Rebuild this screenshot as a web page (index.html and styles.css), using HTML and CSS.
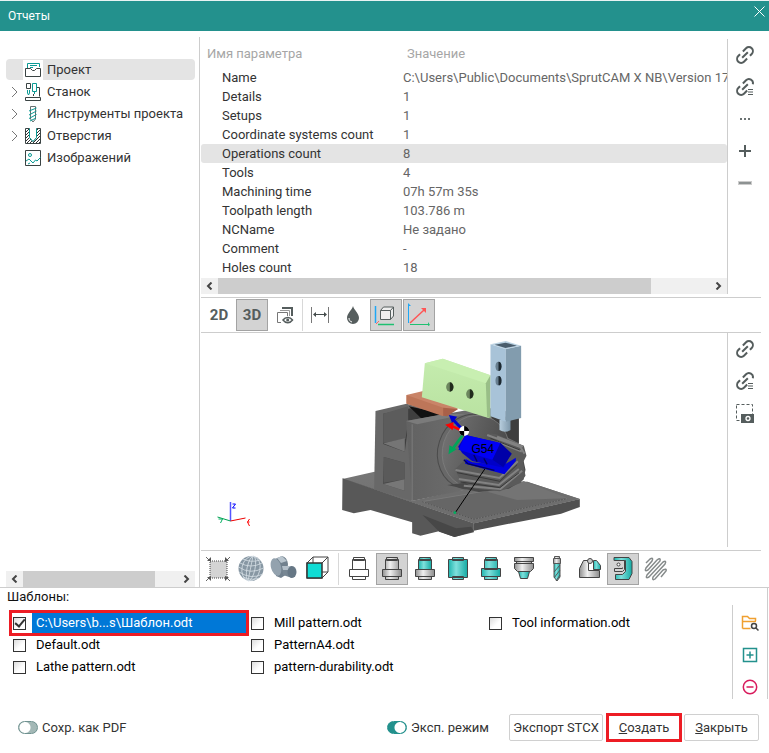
FILE: index.html
```html
<!DOCTYPE html>
<html lang="ru">
<head>
    <meta charset="UTF-8">
    <meta name="viewport" content="width=device-width, initial-scale=1.0">
    <title>Отчеты</title>
    <link rel="stylesheet" href="styles.css">
</head>
<body>

<!-- Shared icons and gradients -->
<svg class="defs" width="0" height="0" aria-hidden="true">
    <defs>
        <linearGradient id="steel"><stop offset="0" stop-color="#8f8f8f"/><stop offset=".4" stop-color="#f0f0f0"/><stop offset="1" stop-color="#8c8c8c"/></linearGradient>
        <linearGradient id="teal"><stop offset="0" stop-color="#1fb5ae"/><stop offset=".4" stop-color="#7fe0dc"/><stop offset="1" stop-color="#14aaa3"/></linearGradient>
        <pattern id="hatch" width="3" height="3" patternUnits="userSpaceOnUse"><path d="M0 3L3 0" stroke="#333" stroke-width="1"/></pattern>
    </defs>
    <symbol id="link" viewBox="0 0 20 20">
        <g fill="none" stroke="#555d5d" stroke-width="2" transform="translate(10 10) rotate(-45)">
            <path d="M1 -4H5.500a4 4 0 0 1 0 8H3M-1 4H-5.500a4 4 0 0 1 0-8H-3M-4 0H4"/>
        </g>
    </symbol>
    <symbol id="link-list" viewBox="0 0 20 20">
        <g fill="none" stroke="#555d5d" stroke-width="2" transform="translate(10 10) rotate(-45)">
            <path d="M1 -4H5.500a4 4 0 0 1 2 7.500M-1 4H-5.500a4 4 0 0 1 0-8H-3M-4 0H4"/>
        </g>
        <path d="M13 12.500h5M13 15h5M13 17.500h5" stroke="#555d5d"/>
    </symbol>
</svg>

<header class="titlebar">
    <h1>Отчеты</h1>
    <button class="close" aria-label="Закрыть окно">
        <svg width="11" height="11" viewBox="0 0 11 11"><path d="M.5 .5l10 10M10.500 .5l-10 10" stroke="#fff" fill="none"/></svg>
    </button>
</header>

<main class="workspace">
    <!-- Report sections tree -->
    <nav class="sidebar">
        <ul class="tree">
            <li class="selected">
                <span class="arrow"></span>
                <svg class="tree-icon" width="20" height="20" viewBox="0 0 20 20" fill="none">
                    <path d="M4.500 8V3.500h12V7M7 5.500h7M7 7.500h3" stroke="#0a9a94"/>
                    <path d="M2.500 16.500v-8h5l2 2h2l2-2h4v8z" stroke="#3a4343"/>
                </svg>
                <span>Проект</span>
            </li>
            <li>
                <span class="arrow"><svg width="7" height="12" viewBox="0 0 7 12"><path d="M1 1l5 5-5 5" fill="none" stroke="#777"/></svg></span>
                <svg class="tree-icon" width="20" height="20" viewBox="0 0 20 20" fill="none">
                    <path d="M3.500 1.500h4v5h-4zM2.500 15.500h15v3h-15zM14 5.500h2.500v9M10.500 12v2" stroke="#3a4343"/>
                    <path d="M9.500 1.500h4v8h-4zM4.500 8v3l1 2 1-2v-3M11.500 10v2" stroke="#0a9a94"/>
                </svg>
                <span>Станок</span>
            </li>
            <li>
                <span class="arrow"><svg width="7" height="12" viewBox="0 0 7 12"><path d="M1 1l5 5-5 5" fill="none" stroke="#777"/></svg></span>
                <svg class="tree-icon" width="20" height="20" viewBox="0 0 20 20" fill="none">
                    <path d="M7.500 5V2.500h5V6M7.500 5v10l2.500 3 2.500-3V6" stroke="#667070"/>
                    <path d="M6 7l7.500-3M6 11l7.500-4M6 14.500l7.500-4M7 17l6-3" stroke="#0a9a94"/>
                </svg>
                <span>Инструменты проекта</span>
            </li>
            <li>
                <span class="arrow"><svg width="7" height="12" viewBox="0 0 7 12"><path d="M1 1l5 5-5 5" fill="none" stroke="#777"/></svg></span>
                <svg class="tree-icon" width="20" height="20" viewBox="0 0 20 20">
                    <path d="M2.500 2.500h4v9l3.500 4 3.500-4v-9h4v15h-15z" fill="url(#hatch)" stroke="#3a4343"/>
                    <path d="M6.500 2.500v9l3.500 4 3.500-4v-9" fill="#fff" stroke="#0a9a94"/>
                </svg>
                <span>Отверстия</span>
            </li>
            <li>
                <span class="arrow"></span>
                <svg class="tree-icon" width="20" height="20" viewBox="0 0 20 20" fill="none">
                    <path d="M2.500 2.500h15v15h-15z" stroke="#3a4343"/>
                    <path d="M3 13l3-2 4 4 2.500-3 1.500 1 3.500-3.500M5 16l2-1" stroke="#0a9a94"/>
                    <circle cx="7" cy="7" r="1.500" stroke="#0a9a94"/>
                </svg>
                <span>Изображений</span>
            </li>
        </ul>
        <div class="scrollbar">
            <button class="scroll-arrow" aria-label="Влево"><svg width="7" height="8" viewBox="0 0 7 8"><path d="M5.500 .5L2 4l3.500 3.500" fill="none" stroke="#444" stroke-width="2"/></svg></button>
            <div class="scroll-track"><div class="scroll-thumb" style="width: 85%"></div></div>
            <button class="scroll-arrow" aria-label="Вправо"><svg width="7" height="8" viewBox="0 0 7 8"><path d="M1.500 .5L5 4 1.500 7.500" fill="none" stroke="#444" stroke-width="2"/></svg></button>
        </div>
    </nav>

    <div class="content">
        <!-- Project parameters -->
        <section class="pane">
            <div class="params">
                <table>
                    <thead>
                        <tr><th>Имя параметра</th><th>Значение</th></tr>
                    </thead>
                    <tbody>
                        <tr><td>Name</td><td>C:\Users\Public\Documents\SprutCAM X NB\Version 17\</td></tr>
                        <tr><td>Details</td><td>1</td></tr>
                        <tr><td>Setups</td><td>1</td></tr>
                        <tr><td>Coordinate systems count</td><td>1</td></tr>
                        <tr class="selected"><td>Operations count</td><td>8</td></tr>
                        <tr><td>Tools</td><td>4</td></tr>
                        <tr><td>Machining time</td><td>07h 57m 35s</td></tr>
                        <tr><td>Toolpath length</td><td>103.786 m</td></tr>
                        <tr><td>NCName</td><td>Не задано</td></tr>
                        <tr><td>Comment</td><td>-</td></tr>
                        <tr><td>Holes count</td><td>18</td></tr>
                    </tbody>
                </table>
                <div class="scrollbar">
                    <button class="scroll-arrow" aria-label="Влево"><svg width="7" height="8" viewBox="0 0 7 8"><path d="M5.500 .5L2 4l3.500 3.500" fill="none" stroke="#444" stroke-width="2"/></svg></button>
                    <div class="scroll-track"><div class="scroll-thumb" style="width: 88%"></div></div>
                    <button class="scroll-arrow" aria-label="Вправо"><svg width="7" height="8" viewBox="0 0 7 8"><path d="M1.500 .5L5 4 1.500 7.500" fill="none" stroke="#444" stroke-width="2"/></svg></button>
                </div>
            </div>
            <div class="rail">
                <button aria-label="Ссылка"><svg width="20" height="20"><use href="#link"/></svg></button>
                <button aria-label="Ссылка списком"><svg width="20" height="20"><use href="#link-list"/></svg></button>
                <button aria-label="Ещё"><svg width="20" height="20" viewBox="0 0 20 20"><path d="M5 9h2v2H5zM9 9h2v2H9zM13 9h2v2h-2z" fill="#6b7272"/></svg></button>
                <button aria-label="Добавить"><svg width="20" height="20" viewBox="0 0 20 20"><path d="M10 4v12M4 10h12" stroke="#555d5d" stroke-width="2"/></svg></button>
                <button aria-label="Убрать"><svg width="20" height="20" viewBox="0 0 20 20"><path d="M3 8h14v4H3z" fill="#ccc"/><path d="M4 9h12v2H4z" fill="#8d9292"/></svg></button>
            </div>
        </section>

        <!-- View toolbar -->
        <div class="toolbar">
            <button class="mode">2D</button>
            <button class="mode active">3D</button>
            <button aria-label="Видимость"><svg width="20" height="20" viewBox="0 0 20 20" fill="none">
                <path d="M7 3h10v8" stroke="#555d5d" stroke-width="2"/><path d="M5 5.500h9.500V11" stroke="#999"/><path d="M6 17.500H2.500v-10h10V11" stroke="#777"/>
                <path d="M8 15c2.500-3.500 7-3.500 9.500 0-2.500 3.500-7 3.500-9.500 0z" fill="#fff" stroke="#555d5d" stroke-width="1.500"/><circle cx="12.700" cy="15" r="1.500" fill="#555d5d"/>
            </svg></button>
            <span class="separator"></span>
            <button aria-label="Размер"><svg width="20" height="20" viewBox="0 0 20 20">
                <path d="M1.500 2v16M18.500 2v16" stroke="#777"/><path d="M4 9.500h12" stroke="#444b4b"/><path d="M3 9.500l3-2.500v5zM17 9.500l-3-2.500v5z" fill="#444b4b"/>
            </svg></button>
            <button aria-label="Жидкость"><svg width="20" height="20" viewBox="0 0 20 20">
                <path d="M10 1c1 4 6 7.500 6 12a6 6 0 0 1-12 0c0-4.500 5-8 6-12z" fill="#555d5d"/><path d="M6 13c0 2 1 3.500 3 4" stroke="#fff" fill="none"/>
            </svg></button>
            <button class="active" aria-label="Габарит"><svg width="24" height="24" viewBox="0 0 24 24" fill="none">
                <path d="M1.500 3v17" stroke="#1ea7f5" stroke-width="1.500"/><path d="M4 21.500h16" stroke="#1fc071" stroke-width="1.500"/><path d="M2 21l3-3" stroke="#f66"/>
                <path d="M6.500 7.500l3-3.500h10v9l-3 3.500h-10zM6.500 7.500h10v9M16.500 7.500l3-3.500" stroke="#555d5d" fill="#eee"/>
            </svg></button>
            <button class="active" aria-label="Оси"><svg width="24" height="24" viewBox="0 0 24 24" fill="none">
                <path d="M1.500 2v18" stroke="#1ea7f5"/><path d="M1 0v3h3z" fill="#1ea7f5"/><path d="M3 21.500h18" stroke="#1fc071"/><path d="M21 19v4l2-1z" fill="#1fc071"/>
                <path d="M3 20L17 7" stroke="#f55" stroke-width="1.500"/><path d="M14 5h5v5z" fill="#f55"/>
            </svg></button>
        </div>

        <!-- Machine view -->
        <section class="pane">
            <svg class="scene" height="217" viewBox="0 0 525 217" preserveAspectRatio="xMidYMid meet">
                <defs>
                    <linearGradient id="wall"><stop offset="0" stop-color="#626262"/><stop offset="1" stop-color="#767676"/></linearGradient>
                    <linearGradient id="tray" x1="0" y1="0" x2="1" y2="1"><stop offset="0" stop-color="#777"/><stop offset="1" stop-color="#686868"/></linearGradient>
                    <linearGradient id="disk"><stop offset="0" stop-color="#707070"/><stop offset="1" stop-color="#474747"/></linearGradient>
                    <linearGradient id="green" x1="0" y1="0" x2="0" y2="1"><stop offset="0" stop-color="#c5ecae"/><stop offset="1" stop-color="#b9e2a1"/></linearGradient>
                    <linearGradient id="nozzle"><stop offset="0" stop-color="#b8cede"/><stop offset="1" stop-color="#7e98ab"/></linearGradient>
                </defs>
                <g transform="translate(129 2) scale(.3333)">
                    <!-- Bed -->
                    <path d="M36 432l96-22 113 88 345-58 158 52-318 73z" fill="url(#tray)"/>
                    <path d="M36 430l394 135v27l-58 14-47-17-55 13-25-7v-33L120 525l-50 10-35-10z" fill="#585858"/>
                    <path d="M276 540l50 50 46 16 58-17-8-14-45 5z" fill="#474747"/>
                    <path d="M430 565l318-73v24l-56 20-262 51z" fill="#505050"/>
                    <path d="M245 498l130-30 215-28 158 52-318 73z" fill="#6e6e6e"/>
                    <path d="M275 500l310-52 125 43-280 62z" fill="#666" stroke="#808080" stroke-width="2"/>
                    <path d="M470 470l110-32 130 52-150 5z" fill="#747474"/>
                    <path d="M275 500l155 53 280-62" fill="none" stroke="#444" stroke-width="2" stroke-dasharray="5 4"/>
                    <!-- Housing -->
                    <path d="M135 228l93-22 122 30-105 262-114-35z" fill="#686868"/>
                    <path d="M158 236l90-18 97 22-110 18-12 92-65-23z" fill="#3f3f3f"/>
                    <path d="M158 236l75-22v50l-8 48-67 12z" fill="#5c5c5c"/>
                    <path d="M158 325l65-15v40z" fill="#757575"/>
                    <path d="M160 366l62 17v84l-64-20z" fill="#484848"/>
                    <path d="M160 366l62 17v50l-62 10z" fill="#5a5a5a"/>
                    <path d="M158 447l64-14v34z" fill="#777"/>
                    <path d="M235 214l110 24-70 15z" fill="#111"/>
                    <path d="M227 258l123-22 110-20 105 20v205l-165 25-155 32z" fill="url(#wall)"/>
                    <path d="M227 258l118-22 60 2-145 30z" fill="#7b7b7b"/>
                    <path d="M245 268v230" stroke="#7c7c7c" stroke-width="3"/>
                    <path d="M480 240l85 10v75l-60-30z" fill="#3e3e3e"/>
                    <!-- Spindle disk -->
                    <ellipse cx="422" cy="350" rx="100" ry="113" transform="rotate(18 422 350)" fill="#686868" stroke="#4b4b4b" stroke-width="3"/>
                    <ellipse cx="436" cy="350" rx="100" ry="110" transform="rotate(18 436 350)" fill="url(#disk)" stroke="#808080" stroke-width="2"/>
                    <path d="M350 450l130-16 90-100 15 70-6 30-44 27-90 10z" fill="#484848"/>
                    <!-- Chuck -->
                    <path d="M470 295l25 2 85 35 8 30-10 20 7 40-15 22-62 25-75-8-45-28-15-30 30-28 110-20z" fill="#5a5a5a"/>
                    <g stroke="#828282" stroke-width="6" fill="none">
                        <path d="M470 300l100 36 12 20M375 405l132 24 55-50M385 432l120 18 60-48M400 452l110 10 65-55M500 305l78 30M500 320l74 30"/>
                    </g>
                    <g stroke="#393939" stroke-width="3" fill="none">
                        <path d="M480 310l88 35M380 413l128 26 52-50M390 441l118 17 58-45"/>
                    </g>
                    <!-- Part -->
                    <path d="M405 372l20 10 95 8 36-22v10l-34 40-118-32z" fill="#0000e0"/>
                    <path d="M383 335l22-35 105 24 30 32-20 42-95-20-30-24z" fill="#0000c8"/>
                    <path d="M405 300l105 24-24 50-102-30z" fill="#0000f5"/>
                    <path d="M510 324l34 32-26 40-32-22z" fill="#0000a8"/>
                    <path d="M400 374l12 12 80 20M430 360l10 20M460 370l10 18" stroke="#000060" fill="none" stroke-width="4"/>
                    <!-- Orange slide -->
                    <path d="M228 180l50-12 105 52-40 22-115-37z" fill="#c98468"/>
                    <path d="M228 180l110 38v26l-110-38z" fill="#bd7659"/>
                    <path d="M338 218l45 4-33 22-12-2z" fill="#a96048"/>
                    <!-- Green block -->
                    <path d="M283 85l54-14 143 50-4 129-202-63z" fill="url(#green)"/>
                    <path d="M283 85l54-14 143 50-14 24z" fill="#c8efb1"/>
                    <path d="M466 145l14-24v128l-10-2z" fill="#99be87"/>
                    <ellipse cx="358" cy="156" rx="11" ry="14" fill="#6d865f"/><path d="M358 142a11 14 0 0 1 0 28z" fill="#202b1c"/>
                    <ellipse cx="418" cy="177" rx="11" ry="14" fill="#6d865f"/><path d="M418 163a11 14 0 0 1 0 28z" fill="#202b1c"/>
                    <!-- Blue tool holder -->
                    <path d="M507 255h33v30q-16 11-33 0z" fill="url(#nozzle)"/>
                    <path d="M480 28l46 14v218l-46-16z" fill="#a8c3d8"/>
                    <path d="M526 42l46-10v217l-46 11z" fill="#829cae"/>
                    <path d="M480 28l46-10 46 14-46 11z" fill="#bbd2e2"/>
                    <path d="M493 29l32-6 34 9-34 7z" fill="#4b5e6d"/>
                    <ellipse cx="504" cy="94" rx="9" ry="14" fill="#687f90"/><path d="M504 80a9 14 0 0 1 0 28z" fill="#1c2830"/>
                    <ellipse cx="504" cy="137" rx="9" ry="14" fill="#687f90"/><path d="M504 123a9 14 0 0 1 0 28z" fill="#1c2830"/>
                    <!-- Origin -->
                    <path d="M400 288l-32-34" stroke="#0000d0" stroke-width="9"/><path d="M355 240l25 5-15 19z" fill="#0000d0"/>
                    <path d="M400 290l-38-18" stroke="#f00" stroke-width="8"/><path d="M344 269l25-7-2 24z" fill="#f00"/>
                    <path d="M397 300l-28 38" stroke="#00a55a" stroke-width="8"/><path d="M354 358l3-27 22 12z" fill="#00a55a"/>
                    <circle cx="401" cy="288" r="15" fill="#fff"/><path d="M401 288v-15a15 15 0 0 1 15 15zM401 288v15a15 15 0 0 1-15-15z" fill="#000"/>
                    <path d="M463 402l-88 130" stroke="#000" stroke-width="3"/><circle cx="373" cy="533" r="4" fill="#00b060"/>
                </g>
                <text class="zero-label" x="270" y="120">G54</text>
                <!-- Axes -->
                <path d="M29 188v-19" stroke="#55f" stroke-width="1.500"/><path d="M29 188l15-3" stroke="#e00"/><path d="M29 188l-13-4" stroke="#00a050"/>
                <path d="M31 171h3l-3 4h3" stroke="#00f" fill="none"/><path d="M48 186l-2 3 2 4M46 189h2" stroke="#f00" fill="none"/><path d="M17 186h4l-2 4" stroke="#00b060" fill="none"/>
            </svg>
            <div class="rail">
                <button aria-label="Ссылка"><svg width="20" height="20"><use href="#link"/></svg></button>
                <button aria-label="Ссылка списком"><svg width="20" height="20"><use href="#link-list"/></svg></button>
                <button aria-label="Снимок"><svg width="20" height="20" viewBox="0 0 20 20">
                    <path d="M1.500 1.500h16v16h-16z" fill="none" stroke="#555d5d" stroke-dasharray="3 2"/>
                    <path d="M6 11h13v9H6z" fill="#555d5d"/><circle cx="13" cy="15.500" r="2" fill="none" stroke="#fff" stroke-width="1.300"/>
                </svg></button>
            </div>
        </section>

        <!-- Display toolbar -->
        <div class="toolbar display-toolbar">
            <button aria-label="Показать всё"><svg width="28" height="28" viewBox="0 0 28 28">
                <path d="M6 6h17v17H6z" fill="#d4d4d4" stroke="#444" stroke-dasharray="1 1"/>
                <path d="M2 2l5 5M26 2l-5 5M2 26l5-5M26 26l-5-5" stroke="#666"/><path d="M3 6h4V2zM25 6h-4V2zM3 22h4v4zM25 22h-4v4z" fill="#555"/>
            </svg></button>
            <button aria-label="Сфера"><svg width="28" height="28" viewBox="0 0 28 28" fill="none">
                <circle cx="14" cy="13.500" r="12.500" fill="#8797a3"/>
                <g stroke="#d5dee5" stroke-width=".8"><ellipse cx="14" cy="13.500" rx="4" ry="12.500" transform="rotate(12 14 13.500)"/><ellipse cx="14" cy="13.500" rx="9" ry="12.500" transform="rotate(12 14 13.500)"/><path d="M3 8q11 6 22 0M1.500 12q12 8 25 1M2 17q12 8 24 2M6 22q9 4 16 1M6 4q8 4 17 1M16 1l-5 25"/></g>
            </svg></button>
            <button aria-label="Тело"><svg width="28" height="28" viewBox="0 0 28 28">
                <path d="M5 4l7-3q5 1 6 8l-1 10-6 4-5-2z" fill="#71818e"/><path d="M7 3l5-2 5 5-6 2z" fill="#b9c5ce"/>
                <ellipse cx="6" cy="12" rx="5" ry="9" transform="rotate(-15 6 12)" fill="#93a2ae"/>
                <path d="M12 11l10 0v12l-9-3z" fill="#778793"/><path d="M12 11h9l2 4-10 0z" fill="#b4c0ca"/><ellipse cx="22" cy="17" rx="4.500" ry="6" fill="#667785"/>
            </svg></button>
            <button aria-label="Куб"><svg width="28" height="28" viewBox="0 0 28 28">
                <path d="M4 8l6-6h15v15l-6 6H4zM10 2v15h15M4 23l6-6M19 8l6-6" fill="#fff" stroke="#444"/><path d="M4 8h15v15H4z" fill="#10dcd5" stroke="#333" stroke-width="1.500"/>
            </svg></button>
            <span class="separator"></span>
            <button aria-label="Каркас"><svg width="28" height="28" viewBox="0 0 28 28" fill="#fff" stroke="#444">
                <path d="M8.500 2.500h11v3h-11zM7.500 4.500h13v10h-13zM7.500 21.500h13v3h-13zM4.500 14.500h19v7h-19z"/>
            </svg></button>
            <button class="active" aria-label="Станок"><svg width="28" height="28" viewBox="0 0 28 28" fill="url(#steel)" stroke="#444">
                <path d="M8.500 2.500h11v3h-11zM7.500 4.500h13v10h-13zM7.500 21.500h13v3h-13zM4.500 14.500h19v7h-19z"/>
            </svg></button>
            <button aria-label="Деталь"><svg width="28" height="28" viewBox="0 0 28 28" fill="url(#steel)" stroke="#444">
                <path d="M8.500 2.500h11v3h-11zM7.500 4.500h13v10h-13z" fill="url(#teal)"/><path d="M7.500 21.500h13v3h-13zM4.500 14.500h19v7h-19z"/>
            </svg></button>
            <button aria-label="Заготовка"><svg width="28" height="28" viewBox="0 0 28 28" fill="url(#teal)" stroke="#444">
                <path d="M8.500 2.500h11v3h-11zM8.500 21.500h11v3h-11zM4.500 4.500h19v18h-19z"/>
            </svg></button>
            <button aria-label="Остаток"><svg width="28" height="28" viewBox="0 0 28 28" fill="url(#teal)" stroke="#444">
                <path d="M8.500 2.500h11v3h-11zM7.500 4.500h13v10h-13zM7.500 21.500h13v3h-13zM4.500 13.500h19v8h-19z"/>
            </svg></button>
            <button aria-label="Патрон"><svg width="28" height="28" viewBox="0 0 28 28" fill="url(#steel)" stroke="#444">
                <path d="M8.500 16.500h11l-2 7h-7z" fill="url(#teal)"/><path d="M4.500 2.500h19v4h-19zM6.500 6.500h15v2h-15zM4.500 8.500h19v5l-3 3h-13l-3-3z"/>
            </svg></button>
            <button aria-label="Инструмент"><svg width="28" height="28" viewBox="0 0 28 28" stroke="#555">
                <path d="M11 8h6v14l-3 4-3-4z" fill="url(#teal)"/><path d="M11.500 1.500h5v2h-5zM10.500 3.500h7v5h-7z" fill="url(#steel)"/><path d="M11 17l6-7M11 23l6-8M13 26l4-6" fill="none"/>
            </svg></button>
            <button aria-label="Оснастка"><svg width="28" height="28" viewBox="0 0 28 28" stroke="#444">
                <path d="M3.500 22.500v-9l4-8h5v10h11v7z" fill="url(#steel)"/><path d="M17.500 14.500v-9h3l4 5v4z" fill="url(#teal)"/><circle cx="14" cy="6" r="2.500" fill="#ccc"/>
            </svg></button>
            <button class="active" aria-label="Узлы станка"><svg width="28" height="28" viewBox="0 0 28 28" fill="url(#teal)" stroke="#444">
                <path d="M5 2.500h15l3 4v12l-3 6H6.500v-5h7l3-3v-11H5z"/><path d="M5.500 5.500h10v9l-2 2h-8v-3h8v-1" fill="#d4d4d4"/><circle cx="9.500" cy="9.500" r="1.500" fill="#fff"/>
            </svg></button>
            <button aria-label="Траектория"><svg width="28" height="28" viewBox="0 0 28 28" fill="none" stroke="#858a8a" stroke-width="1.500">
                <path d="M4 8l4-4q4-2 2 2l-6 7q-2 4 2 2L15 5q4-3 3 1L5 20q-2 4 2 2L21 7q4-2 2 2L11 22q-1 4 2 2l8-9q4-2 3 1l-5 6"/>
            </svg></button>
        </div>
    </div>
</main>

<!-- Report templates -->
<section class="templates">
    <h2>Шаблоны:</h2>
    <div class="templates-row">
        <div class="template-list">
            <label class="template selected"><input type="checkbox" checked><span>C:\Users\b...s\Шаблон.odt</span></label>
            <label class="template"><input type="checkbox"><span>Default.odt</span></label>
            <label class="template"><input type="checkbox"><span>Lathe pattern.odt</span></label>
            <label class="template"><input type="checkbox"><span>Mill pattern.odt</span></label>
            <label class="template"><input type="checkbox"><span>PatternA4.odt</span></label>
            <label class="template"><input type="checkbox"><span>pattern-durability.odt</span></label>
            <label class="template"><input type="checkbox"><span>Tool information.odt</span></label>
        </div>
        <div class="rail">
            <button aria-label="Открыть папку"><svg width="20" height="20" viewBox="0 0 20 20" fill="none">
                <path d="M2.500 15.500v-12h5l2 2h6v2.500M2.500 15.500h8M3 8.500h13" stroke="#f0a030" stroke-width="1.500"/>
                <circle cx="14" cy="13" r="2.500" stroke="#444" stroke-width="1.500"/><path d="M16 15l2.500 2.500" stroke="#444" stroke-width="1.500"/>
            </svg></button>
            <button aria-label="Добавить шаблон"><svg width="20" height="20" viewBox="0 0 20 20" fill="none" stroke="#23918d" stroke-width="1.500">
                <path d="M3.500 3.500h13v13h-13zM10 6.500v7M6.500 10h7"/>
            </svg></button>
            <button aria-label="Удалить шаблон"><svg width="20" height="20" viewBox="0 0 20 20" fill="none" stroke="#d81b5d" stroke-width="1.500">
                <circle cx="10" cy="10" r="6.700"/><path d="M6.500 10h7"/>
            </svg></button>
        </div>
    </div>
</section>

<footer class="actions">
    <label class="switch"><input type="checkbox"><span>Сохр. как PDF</span></label>
    <label class="switch expert"><input type="checkbox" checked><span>Эксп. режим</span></label>
    <button class="btn btn-export">Экспорт STCX</button>
    <button class="btn btn-create"><u>С</u>оздать</button>
    <button class="btn"><u>З</u>акрыть</button>
</footer>

</body>
</html>
```
FILE: styles.css
```css
:root {
    --teal: #23918d;
    --line: #cdcdcd;
    --selected: #e4e4e4;
    --text: #333;
    --muted: #666;
    --mark: #ed1c24;
}

* {
    box-sizing: border-box;
}

body {
    margin: 0;
    background-color: #fff;
    color: var(--text);
    font-family: Roboto, Arial, sans-serif;
    font-size: 13px;
    line-height: 19px;
}

button {
    font: inherit;
    color: inherit;
    background: none;
    border: none;
    padding: 0;
    cursor: pointer;
}

svg {
    display: block;
}

.defs {
    position: absolute;
}

/* Title bar */
.titlebar {
    display: flex;
    justify-content: space-between;
    align-items: flex-start;
    height: 31px;
    border-top: 1px solid #e8f3f3;
    background-color: var(--teal);
    color: #fff;
}

.titlebar h1 {
    margin: 0;
    padding-left: 8px;
    font-size: 12px;
    font-weight: normal;
    line-height: 31px;
}

.close {
    padding: 5px 4px;
}

/* Workspace */
.workspace {
    display: flex;
    padding-top: 6px;
    border-bottom: 1px solid var(--line);
}

.sidebar {
    flex: none;
    display: flex;
    flex-direction: column;
    justify-content: space-between;
    width: 200px;
    padding: 22px 4px 0 6px;
    border-right: 1px solid var(--line);
}

.tree {
    margin: 0;
    padding: 0;
    list-style: none;
}

.tree li {
    display: flex;
    align-items: center;
    height: 21px;
    margin-bottom: 1px;
    border-radius: 4px;
    white-space: nowrap;
}

.tree .selected,
.params .selected td {
    background-color: var(--selected);
}

.arrow {
    width: 17px;
    padding-left: 5px;
}

.tree-icon {
    margin-right: 4px;
    background-color: #fff;
}

.scrollbar {
    display: flex;
    height: 16px;
    background-color: #f0f0f0;
}

.scroll-arrow {
    display: flex;
    align-items: center;
    justify-content: center;
    width: 17px;
}

.scroll-track {
    flex: 1;
}

.scroll-thumb {
    height: 100%;
    background-color: #cdcdcd;
}

.content {
    flex: 1;
    min-width: 0;
    padding: 2px 8px 0 1px;
}

.pane {
    display: flex;
}

.params {
    flex: 1;
    min-width: 0;
    margin-bottom: 3px;
}

.params table {
    width: 100%;
    table-layout: fixed;
    border-collapse: separate;
    border-spacing: 0;
    margin-bottom: 1px;
}

.params th {
    height: 29px;
    padding: 0 6px;
    color: #a6a6a6;
    font-weight: normal;
    text-align: left;
}

.params th:first-child {
    width: 200px;
}

.params td {
    height: 19px;
    padding: 0 0 0 2px;
    color: var(--muted);
    white-space: nowrap;
    overflow: hidden;
}

.params td:first-child {
    padding-left: 21px;
    color: var(--text);
    border-radius: 3px 0 0 3px;
}

.params td:last-child {
    border-radius: 0 3px 3px 0;
}

.rail {
    flex: none;
    width: 35px;
    border-left: 1px solid var(--line);
}

.rail button {
    display: flex;
    align-items: center;
    justify-content: center;
    width: 100%;
    height: 32px;
}

.pane .rail {
    width: 34px;
    margin-bottom: 3px;
}

.toolbar {
    display: flex;
    gap: 1px;
    height: 36px;
    padding: 1px 2px;
    border-top: 1px solid var(--line);
    border-bottom: 1px solid var(--line);
}

.toolbar button {
    display: flex;
    align-items: center;
    justify-content: center;
    width: 32px;
    height: 32px;
    border: 1px solid transparent;
}

.toolbar .active {
    background-color: #d3d3d3;
    border-color: #a3a3a3;
}

.toolbar .mode {
    color: #555d5d;
    font-size: 15px;
    font-weight: bold;
}

.separator {
    width: 1px;
    background-color: #d8d8d8;
}

.display-toolbar {
    height: 37px;
    padding: 2px 1px;
    border-bottom: none;
}

.display-toolbar .separator {
    margin: 0 3px 0 4px;
}

.scene {
    flex: 1;
    min-width: 0;
}

.zero-label {
    font-family: "Liberation Sans", Arial, sans-serif;
    font-size: 12px;
}

/* Templates */
.templates {
    margin: 9px 1px 0 0;
    border-right: 1px solid var(--line);
}

.templates h2 {
    margin: -9px 0 0;
    padding-left: 7px;
    color: #111;
    font-size: 13px;
    font-weight: normal;
    line-height: 17px;
}

.templates-row {
    display: flex;
}

.template-list {
    flex: 1;
    display: grid;
    grid-template-rows: repeat(3, 20px);
    grid-auto-columns: 1fr;
    grid-auto-flow: column;
    gap: 2px 4px;
    padding: 8px 10px 0 12px;
}

.template {
    display: flex;
    align-items: center;
    gap: 6px;
    padding-left: 1px;
    color: #000;
}

.template input {
    appearance: none;
    display: grid;
    place-content: center;
    width: 13px;
    height: 13px;
    margin: 0;
    border: 1px solid #333;
    background: linear-gradient(135deg, #dcdcdc, #fff 60%);
}

.template input:checked::before {
    content: "";
    width: 4px;
    height: 8px;
    margin-bottom: 2px;
    border: solid #333;
    border-width: 0 2px 2px 0;
    transform: rotate(40deg);
}

.template span {
    flex: 1;
    padding-left: 4px;
    line-height: 20px;
}

.template.selected {
    outline: 3px solid var(--mark);
}

.template.selected span {
    background-color: #0078d7;
    color: #fff;
}

.templates .rail {
    display: grid;
    gap: 8px;
    padding-top: 6px;
}

.templates .rail button {
    height: 24px;
}

/* Footer */
.actions {
    display: flex;
    align-items: center;
    padding: 14px 10px 11px 18px;
}

.switch {
    display: flex;
    align-items: center;
    gap: 4px;
}

.switch input {
    appearance: none;
    width: 20px;
    height: 13px;
    margin: 0;
    border: 1px solid #6f9290;
    border-radius: 7px;
    background: radial-gradient(circle at 6px 50%, #fff 5px, #a3b8b6 6px);
}

.switch input:checked {
    border-color: var(--teal);
    background: radial-gradient(circle at 12px 50%, #fff 5px, var(--teal) 6px);
}

.expert {
    margin-left: auto;
    margin-right: 20px;
}

.btn {
    min-width: 75px;
    height: 27px;
    border: 1px solid #d0d0d0;
    border-radius: 2px;
}

.btn-export {
    min-width: 94px;
}

.btn-create {
    min-width: 76px;
    height: 29px;
    margin: 0 2px 0 3px;
    border: 3px solid var(--mark);
    border-radius: 0;
}
```
